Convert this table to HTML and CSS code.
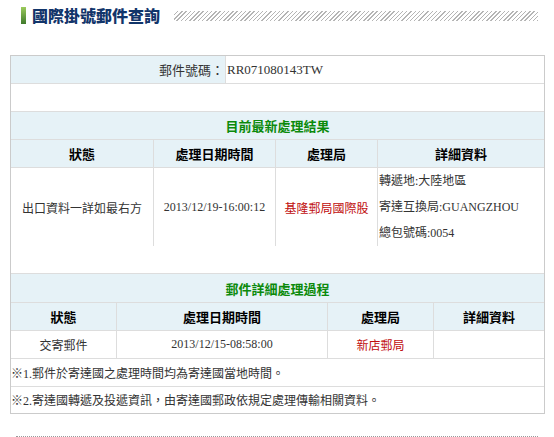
FILE: index.html
```html
<!DOCTYPE html>
<html lang="zh-Hant">
<head>
<meta charset="utf-8">
<title>國際掛號郵件查詢</title>
<link rel="stylesheet" href="styles.css">
</head>
<body>
<div class="page-head">
  <span class="head-bar"></span>
  <h1 class="head-title">國際掛號郵件查詢</h1>
  <span class="head-hatch"></span>
</div>

<div class="box">
  <div class="row row-id">
    <div class="cell label">郵件號碼：</div>
    <div class="cell value serif">RR071080143TW</div>
  </div>
  <div class="row row-blank"><div class="cell"></div></div>
  <div class="row"><div class="cell section">目前最新處理結果</div></div>
  <div class="row cols-a">
    <div class="cell th">狀態</div>
    <div class="cell th">處理日期時間</div>
    <div class="cell th">處理局</div>
    <div class="cell th">詳細資料</div>
  </div>
  <div class="row cols-a row-data">
    <div class="cell td">出口資料一詳如最右方</div>
    <div class="cell td serif">2013/12/19-16:00:12</div>
    <div class="cell td red">基隆郵局國際股</div>
    <div class="cell td detail">轉遞地:大陸地區<br>寄達互換局:GUANGZHOU<br>總包號碼:0054</div>
  </div>
  <div class="row row-blank"><div class="cell"></div></div>
  <div class="row row-tall"><div class="cell section">郵件詳細處理過程</div></div>
  <div class="row cols-b">
    <div class="cell th">狀態</div>
    <div class="cell th">處理日期時間</div>
    <div class="cell th">處理局</div>
    <div class="cell th">詳細資料</div>
  </div>
  <div class="row cols-b">
    <div class="cell td">交寄郵件</div>
    <div class="cell td serif">2013/12/15-08:58:00</div>
    <div class="cell td red">新店郵局</div>
    <div class="cell td"></div>
  </div>
  <div class="row"><div class="cell note">※1.郵件於寄達國之處理時間均為寄達國當地時間。</div></div>
  <div class="row row-short"><div class="cell note">※2.寄達國轉遞及投遞資訊，由寄達國郵政依規定處理傳輸相關資料。</div></div>
</div>

<div class="dots"></div>
</body>
</html>
```

FILE: styles.css
```css
html, body {
  margin: 0;
  padding: 0;
  background: #fff;
}
body {
  font-family: "Liberation Serif", "Noto Sans CJK TC", serif;
  color: #333;
  font-size: 12px;
}
.page-head {
  display: flex;
  align-items: center;
  padding: 7px 16px 0 21px;
  height: 17px;
}
.head-bar {
  width: 5px;
  height: 17px;
  background: linear-gradient(#9ccb5c, #3f7a2c);
}
.head-title {
  margin: 0 14px 0 6px;
  font-family: "Noto Sans CJK TC", sans-serif;
  font-size: 16px;
  line-height: 17px;
  font-weight: 900;
  color: #12356a;
}
.head-hatch {
  flex: 1;
  height: 10px;
  background: repeating-linear-gradient(-45deg, #b5b5b5 0 1px, #fff 1px 3px);
}
.box {
  margin: 31px 0 0 10px;
  width: 533px;
  border: 1px solid #cbcbcb;
  background: #dddddd;
  display: flex;
  flex-direction: column;
  gap: 1px;
}
.row {
  display: grid;
  grid-template-columns: 1fr;
  gap: 1px;
  height: 27px;
}
.row-id { grid-template-columns: 214px 318px; }
.cols-a { grid-template-columns: 142px 121px 101px 166px; }
.cols-b { grid-template-columns: 105px 210px 105px 110px; }
.row-data { height: 77px; }
.row-tall { height: 28px; }
.row-short { height: 26px; }
.cell {
  background: #fff;
  display: flex;
  align-items: center;
  font-family: "Noto Sans CJK TC", sans-serif;
  font-size: 12px;
  color: #333;
}
.label {
  background: #e6f2f7;
  justify-content: flex-end;
  font-size: 13px;
  padding-right: 1px;
}
.value {
  padding-left: 1px;
  font-size: 13px;
}
.serif {
  font-family: "Liberation Serif", "Noto Sans CJK TC", serif;
}
.section {
  background: #e6f2f7;
  justify-content: center;
  color: #0b8a0b;
  font-weight: bold;
  font-size: 13px;
}
.th {
  background: #e6f2f7;
  justify-content: center;
  font-weight: bold;
  font-size: 13px;
  color: #000;
}
.td {
  justify-content: center;
}
.red { color: #c00d0d; }
.detail {
  justify-content: flex-start;
  padding-left: 1px;
  line-height: 26px;
  font-family: "Liberation Serif", "Noto Sans CJK TC", serif;
}
.note {
  justify-content: flex-start;
  font-family: "Liberation Serif", "Noto Sans CJK TC", serif;
}
.dots {
  margin: 22px 0 0 16px;
  width: 522px;
  border-top: 1px dotted #9a9a9a;
}
```
